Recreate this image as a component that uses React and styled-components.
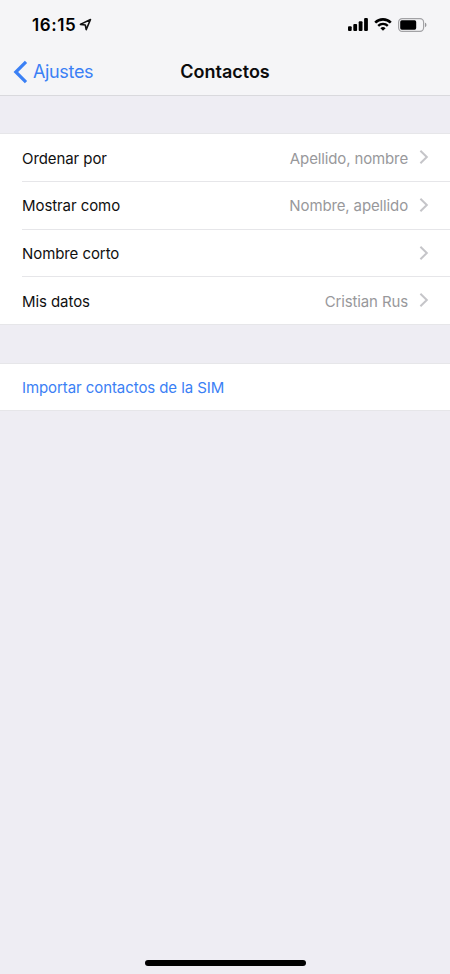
import styled, { createGlobalStyle } from "styled-components";

const Colors = {
    Background: "#eeedf3",
    Bar: "#f5f5f7",
    BarBorder: "#d9d9dd",
    Border: "#e6e6e9",
    Surface: "#ffffff",
    Text: "#101010",
    TextSecondary: "#98989b",
    Chevron: "#c5c5c9",
    Link: "#3b80f5",
};

const GlobalStyle = createGlobalStyle`
    * {
        box-sizing: border-box;
    }
    body {
        margin: 0;
        background: ${Colors.Background};
        font-family: Inter, "Liberation Sans", sans-serif;
    }
`;

const Screen = styled.div`
    display: flex;
    flex-direction: column;
    width: 100%;
    height: 974px;
    overflow: hidden;
    background: ${Colors.Background};
`;

const Header = styled.header`
    height: 96px;
    background: ${Colors.Bar};
    border-bottom: 1px solid ${Colors.BarBorder};
`;

const StatusBar = styled.div`
    display: flex;
    justify-content: space-between;
    align-items: center;
    height: 49px;
    padding: 0 23px 0 32px;

    svg {
        display: block;
    }
`;

const Clock = styled.div`
    display: flex;
    align-items: center;
    gap: 2px;
    font-size: 17px;
    font-weight: 600;
    line-height: 20px;
    color: #000;
`;

const Time = styled.span`
    width: 45px;
    letter-spacing: 0.6px;
    white-space: nowrap;
`;

const StatusIcons = styled.div`
    display: flex;
    align-items: center;
    gap: 6px;
`;

const NavBar = styled.nav`
    display: grid;
    grid-template-columns: 1fr auto 1fr;
    align-items: center;
    height: 46px;
    padding: 0 13px;
`;

const BackButton = styled.button`
    display: flex;
    align-items: center;
    gap: 5px;
    padding: 0;
    border: 0;
    background: none;
    color: ${Colors.Link};
    font: inherit;
    font-size: 18px;
    line-height: 24px;
    letter-spacing: -0.35px;
`;

const Title = styled.h1`
    margin: 0;
    font-size: 18px;
    font-weight: 600;
    line-height: 24px;
    color: #0b0b0c;
`;

const Group = styled.section`
    margin-top: 37px;
    background: ${Colors.Surface};
    border-top: 1px solid ${Colors.Border};
    border-bottom: 1px solid ${Colors.Border};

    & + & {
        margin-top: 38px;
    }
`;

const Row = styled.div`
    display: flex;
    align-items: center;
    height: 47.75px;
    margin-left: 22px;
    padding: ${({ $link }) => ($link ? 1 : 2.5)}px 21px 0 0;
    border-bottom: 1px solid ${Colors.Border};
    font-size: 15px;
    line-height: 20px;
    letter-spacing: -0.08px;
    color: ${({ $link }) => ($link ? Colors.Link : Colors.Text)};

    &:last-child {
        height: 46.5px;
        border-bottom: 0;
    }
`;

const Label = styled.span`
    flex: 1;
`;

const Value = styled.span`
    margin-right: 11px;
    letter-spacing: -0.13px;
    color: ${Colors.TextSecondary};
`;

const Chevron = styled.svg`
    display: block;
    margin-top: -3px;
`;

const HomeIndicator = styled.div`
    width: 161px;
    height: 6px;
    margin: auto auto 8.5px;
    border-radius: 3px;
    background: #000;
`;

const LocationIcon = () => (
    <svg width="13" height="13" viewBox="0 0 13 13" fill="none">
        <path
            d="M1.4 6.4 11.5 1.5 7.2 11.6 6.3 7Z"
            stroke="#111"
            strokeWidth="1.6"
            strokeLinejoin="round"
        />
    </svg>
);

const SignalIcon = () => (
    <svg width="20" height="13" viewBox="0 0 20 13">
        <rect x="0" y="8.2" width="3.7" height="4.8" rx="1" />
        <rect x="5.3" y="6" width="3.8" height="7" rx="1" />
        <rect x="10.7" y="3.2" width="3.8" height="9.8" rx="1" />
        <rect x="16.1" y="0" width="3.8" height="13" rx="1" />
    </svg>
);

const WifiIcon = () => (
    <svg width="18" height="13" viewBox="0 0 18 13" fill="none">
        <path d="M1.2 4.6A11.1 11.1 0 0 1 16.8 4.6" stroke="#000" strokeWidth="2.6" />
        <path d="M4.2 7.8A6.9 6.9 0 0 1 13.8 7.8" stroke="#000" strokeWidth="2.4" />
        <path d="M9 12.8 6.4 10.2A3.7 3.7 0 0 1 11.6 10.2Z" fill="#000" />
    </svg>
);

const BatteryIcon = () => (
    <svg width="29" height="14" viewBox="0 0 29 14">
        <rect
            x="0.6"
            y="0.6"
            width="25"
            height="12.8"
            rx="3.6"
            fill="none"
            stroke="#a2a2a5"
            strokeWidth="1.2"
        />
        <rect x="2.2" y="2.3" width="16" height="9.4" rx="1.6" />
        <path d="M27 4.8c1.9.6 1.9 3.8 0 4.4Z" fill="#97979a" />
    </svg>
);

const BackIcon = () => (
    <svg width="15" height="24" viewBox="0 0 15 24" fill="none">
        <path d="M13 1.8 2.8 12 13 22.2" stroke={Colors.Link} strokeWidth="3.2" />
    </svg>
);

const Disclosure = () => (
    <Chevron width="10" height="14" viewBox="0 0 10 14" fill="none">
        <path d="M1.4 0.8 7.8 7 1.4 13.2" stroke={Colors.Chevron} strokeWidth="2" />
    </Chevron>
);

const settings = [
    { label: "Ordenar por", value: "Apellido, nombre" },
    { label: "Mostrar como", value: "Nombre, apellido" },
    { label: "Nombre corto" },
    { label: "Mis datos", value: "Cristian Rus" },
];

export default function App() {
    return (
        <Screen>
            <GlobalStyle />
            <Header>
                <StatusBar>
                    <Clock>
                        <Time>16:15</Time>
                        <LocationIcon />
                    </Clock>
                    <StatusIcons>
                        <SignalIcon />
                        <WifiIcon />
                        <BatteryIcon />
                    </StatusIcons>
                </StatusBar>
                <NavBar>
                    <BackButton>
                        <BackIcon />
                        Ajustes
                    </BackButton>
                    <Title>Contactos</Title>
                </NavBar>
            </Header>
            <Group>
                {settings.map(({ label, value }) => (
                    <Row key={label}>
                        <Label>{label}</Label>
                        {value && <Value>{value}</Value>}
                        <Disclosure />
                    </Row>
                ))}
            </Group>
            <Group>
                <Row $link>
                    <Label>Importar contactos de la SIM</Label>
                </Row>
            </Group>
            <HomeIndicator />
        </Screen>
    );
}
